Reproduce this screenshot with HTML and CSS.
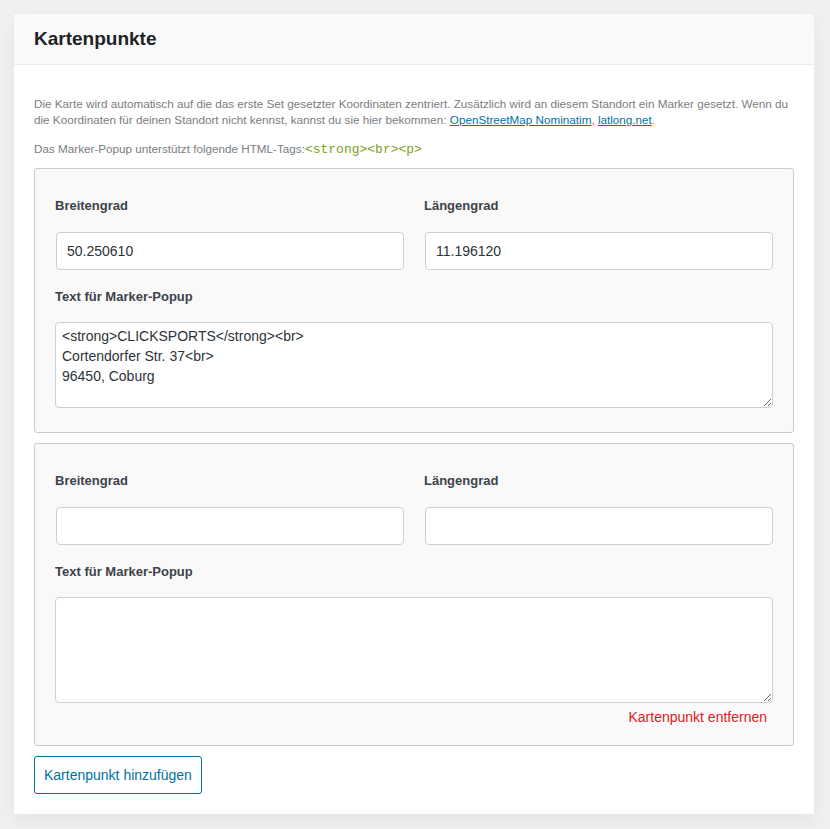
FILE: index.html
```html
<!DOCTYPE html>
<html lang="de">
<head>
<meta charset="utf-8">
<title>Kartenpunkte</title>
<link rel="stylesheet" href="styles.css">
</head>
<body>
<div class="panel">
  <div class="panel-header"><h2 class="panel-title">Kartenpunkte</h2></div>
  <div class="panel-body">
    <p class="description">Die Karte wird automatisch auf die das erste Set gesetzter Koordinaten zentriert. Zusätzlich wird an diesem Standort ein Marker gesetzt. Wenn du die Koordinaten für deinen Standort nicht kennst, kannst du sie hier bekommen: <a href="#">OpenStreetMap Nominatim</a>, <a href="#">latlong.net</a>.</p>
    <p class="description tags">Das Marker-Popup unterstützt folgende HTML-Tags:<code>&lt;strong&gt;&lt;br&gt;&lt;p&gt;</code></p>

    <div class="card">
      <div class="row">
        <div class="field">
          <label class="label">Breitengrad</label>
          <input class="input" type="text" value="50.250610">
        </div>
        <div class="field">
          <label class="label">Längengrad</label>
          <input class="input" type="text" value="11.196120">
        </div>
      </div>
      <div class="field field-text">
        <label class="label">Text für Marker-Popup</label>
        <textarea class="textarea">&lt;strong&gt;CLICKSPORTS&lt;/strong&gt;&lt;br&gt;
Cortendorfer Str. 37&lt;br&gt;
96450, Coburg</textarea>
      </div>
    </div>

    <div class="card card-last">
      <div class="row">
        <div class="field">
          <label class="label">Breitengrad</label>
          <input class="input" type="text" value="">
        </div>
        <div class="field">
          <label class="label">Längengrad</label>
          <input class="input" type="text" value="">
        </div>
      </div>
      <div class="field field-text">
        <label class="label">Text für Marker-Popup</label>
        <textarea class="textarea textarea-tall"></textarea>
      </div>
      <div class="remove-row"><a href="#" class="remove">Kartenpunkt entfernen</a></div>
    </div>

    <button class="button" type="button">Kartenpunkt hinzufügen</button>
  </div>
</div>
</body>
</html>
```

FILE: styles.css
```css
* { box-sizing: border-box; }

html, body {
  margin: 0;
  background: #f0f0f1;
}

body {
  padding: 14px 16px 14px 14px;
  font-family: "Liberation Sans", Arial, sans-serif;
  color: #1d2327;
}

.panel {
  width: 800px;
  background: #fff;
  box-shadow: 0 8px 18px rgba(0, 0, 0, 0.05);
}

.panel-header {
  height: 51px;
  background: #f9f9f9;
  border-bottom: 1px solid #ebebeb;
  padding: 0 20px;
  display: flex;
  align-items: center;
}

.panel-title {
  margin: 0;
  font-size: 19px;
  font-weight: 700;
  color: #1d2327;
}

.panel-body {
  padding: 31px 20px 20px;
}

.description {
  margin: 0;
  font-size: 11.7px;
  line-height: 16px;
  color: #7a7d82;
}

.description a {
  color: #0073aa;
  text-decoration: underline;
}

.tags {
  margin-top: 13px;
  margin-bottom: 10px;
}

.tags code {
  font-family: "Liberation Mono", "DejaVu Sans Mono", monospace;
  font-size: 13px;
  color: #7fa114;
}

.card {
  background: #f9f9f9;
  border: 1px solid #c9cbcf;
  border-radius: 3px;
  padding: 28px 20px 24px;
  margin-bottom: 10px;
}

.card-last {
  padding-bottom: 19px;
}

.row {
  display: grid;
  grid-template-columns: 1fr 1fr;
  column-gap: 20px;
}

.field {
  display: flex;
  flex-direction: column;
}

.field-text {
  margin-top: 18px;
}

.label {
  font-size: 13px;
  font-weight: 700;
  line-height: 18px;
  color: #3c434a;
  margin-bottom: 17px;
}

.field-text .label {
  margin-bottom: 16px;
}

.input {
  height: 38px;
  margin: 0 0 0 1px;
  border: 1px solid #ccd0d4;
  border-radius: 4px;
  background: #fff;
  padding: 0 10px;
  font-family: "Liberation Sans", Arial, sans-serif;
  font-size: 14px;
  color: #2c3338;
  width: calc(100% - 1px);
}

.textarea {
  display: block;
  width: 100%;
  height: 86px;
  margin: 0;
  border: 1px solid #ccd0d4;
  border-radius: 4px;
  background: #fff;
  padding: 3px 6px;
  font-family: "Liberation Sans", Arial, sans-serif;
  font-size: 14px;
  line-height: 20px;
  color: #2c3338;
  resize: both;
}

.textarea-tall {
  height: 106px;
}

.remove-row {
  display: flex;
  justify-content: flex-end;
  padding-right: 6px;
  margin-top: 5px;
}

.remove {
  font-size: 14px;
  line-height: 18px;
  color: #e0201f;
  text-decoration: none;
}

.button {
  display: block;
  height: 38px;
  padding: 0 9px;
  background: #fff;
  border: 1px solid #0071a1;
  border-radius: 3px;
  color: #0071a1;
  font-family: "Liberation Sans", Arial, sans-serif;
  font-size: 14px;
  cursor: pointer;
}
```
